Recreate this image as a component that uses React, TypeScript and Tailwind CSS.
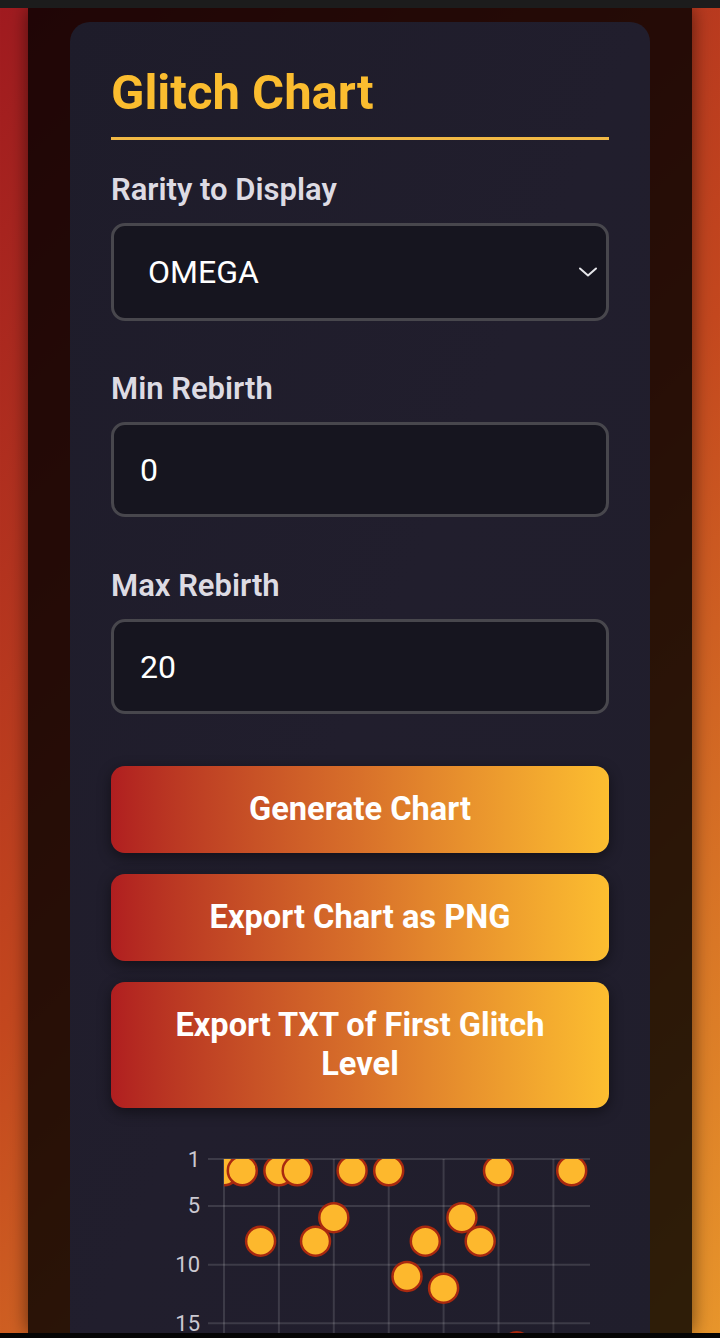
import React from "react";

const points: [number, number][] = [
  [0, 2], [1, 2], [2, 8], [3, 2], [4, 2], [5, 8], [6, 6], [7, 2], [8, 20], [9, 2],
  [10, 11], [11, 8], [12, 12], [13, 6], [14, 8], [15, 2], [16, 17], [17, 19], [18, 22], [19, 2], [20, 18],
];

const LEFT = 113;
const RIGHT = 479;
const TOP = 30;
const XU = (RIGHT - LEFT) / 20;
const YU = 11.74;
const xs = (i: number) => LEFT + i * XU;
const ys = (v: number) => TOP + (v - 1) * YU;

function Chart() {
  const grid = "rgba(255,255,255,0.13)";
  return (
    <svg width="498" height="230" viewBox="0 0 498 230" className="block">
      <defs>
        <clipPath id="plot">
          <rect x={LEFT} y={TOP} width={RIGHT - LEFT + 20} height={260} />
        </clipPath>
      </defs>
      {[0, 3, 6, 9, 12, 15, 18].map((i) => (
        <line key={i} x1={xs(i)} x2={xs(i)} y1={TOP} y2={230} stroke={grid} strokeWidth={2} />
      ))}
      {[1, 5, 10, 15].map((v) => (
        <g key={v}>
          <line x1={97} x2={RIGHT} y1={ys(v)} y2={ys(v)} stroke={grid} strokeWidth={2} />
          <text x={89} y={ys(v)} textAnchor="end" dominantBaseline="central" fontSize={22} fill="#cbc9d1" fontFamily="Roboto, sans-serif">
            {v}
          </text>
        </g>
      ))}
      <g clipPath="url(#plot)">
        {points.map(([i, v]) => (
          <circle key={i} cx={xs(i)} cy={ys(v)} r={14.5} fill="#fdb82d" stroke="#a9290f" strokeWidth={2.5} />
        ))}
      </g>
    </svg>
  );
}

function Label({ children }: { children: React.ReactNode }) {
  return <label className="block text-[31px] leading-[36px] font-semibold text-[#dddbe3] mb-[15px]">{children}</label>;
}

function GradientButton({ children }: { children: React.ReactNode }) {
  return (
    <button className="w-full rounded-[14px] bg-gradient-to-r from-[#b01e20] via-[#d8702a] to-[#fcbe30] px-8 py-[24px] text-[32.6px] leading-[39px] font-bold text-white shadow-[0_4px_14px_rgba(0,0,0,0.45)]">
      {children}
    </button>
  );
}

export default function App() {
  return (
    <div className="h-[1338px] overflow-hidden flex flex-col bg-[#050505] font-['Roboto','Noto_Sans',sans-serif]">
      <div className="h-2 shrink-0 bg-[#1c1c1c]" />
      <div className="flex-1 min-h-0 overflow-hidden px-[28px] bg-[linear-gradient(135deg,#a01b20_0%,#c4481f_50%,#e8962c_100%)]">
        <div className="h-full bg-black/80 shadow-[0_0_18px_rgba(0,0,0,0.55)] pt-[14px] px-[42px]">
          <div className="rounded-[20px] bg-gradient-to-br from-[#1e1c2a] via-[#211e2d] to-[#201e2c] px-[41px] pt-[41px] pb-10">
            <h1 className="text-[49px] leading-[59px] font-bold text-[#fbbd2f] pb-[15px] border-b-[3px] border-[#f2b945]">
              Glitch Chart
            </h1>

            <div className="mt-[32px]">
              <Label>Rarity to Display</Label>
              <div className="relative">
                <select
                  defaultValue="OMEGA"
                  className="block w-full h-[98px] appearance-none rounded-[14px] border-[3px] border-[#48474d] bg-[#16151f] pl-[34px] text-[32px] text-white outline-none"
                >
                  <option>OMEGA</option>
                </select>
                <svg
                  className="pointer-events-none absolute right-[12px] top-1/2 -translate-y-1/2"
                  width="18"
                  height="10"
                  viewBox="0 0 18 10"
                  fill="none"
                >
                  <path d="M1 1.5 L9 8.5 L17 1.5" stroke="#e6e6ea" strokeWidth="2" strokeLinecap="round" strokeLinejoin="round" />
                </svg>
              </div>
            </div>

            <div className="mt-[50px]">
              <Label>Min Rebirth</Label>
              <input
                readOnly
                value="0"
                className="block w-full h-[95px] rounded-[14px] border-[3px] border-[#48474d] bg-[#16151f] pl-[26px] text-[32px] text-white outline-none"
              />
            </div>

            <div className="mt-[51px]">
              <Label>Max Rebirth</Label>
              <input
                readOnly
                value="20"
                className="block w-full h-[95px] rounded-[14px] border-[3px] border-[#48474d] bg-[#16151f] pl-[26px] text-[32px] text-white outline-none"
              />
            </div>

            <div className="mt-[52px] flex flex-col gap-[21px]">
              <GradientButton>Generate Chart</GradientButton>
              <GradientButton>Export Chart as PNG</GradientButton>
              <GradientButton>Export TXT of First Glitch Level</GradientButton>
            </div>

            <div className="mt-[21px]">
              <Chart />
            </div>
          </div>
        </div>
      </div>
      <div className="h-[5px] shrink-0 bg-[#050505]" />
    </div>
  );
}
